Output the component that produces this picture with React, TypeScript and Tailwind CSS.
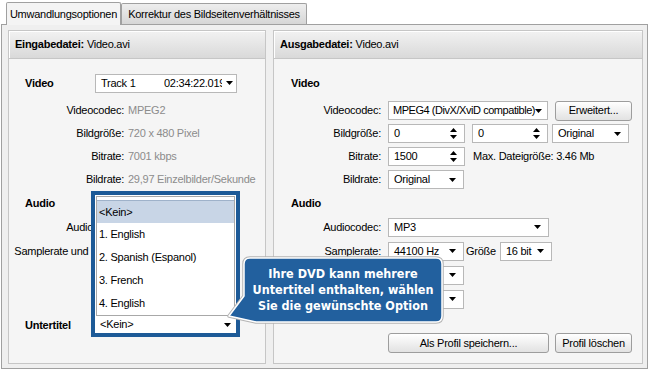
import React from 'react';

const Caret = () => (
  <svg width="7" height="4" viewBox="0 0 7 4" className="shrink-0">
    <path d="M0 0H7L3.5 4Z" fill="#000" />
  </svg>
);

const SpinArrows = () => (
  <svg width="7" height="11" viewBox="0 0 7 11" className="shrink-0">
    <path d="M0 4H7L3.5 0Z M0 7H7L3.5 11Z" fill="#000" />
  </svg>
);

const Select = ({ text, className }: { text: string; className: string }) => (
  <div className={`flex h-[19px] items-center justify-between border border-[#b8b8b8] bg-white pl-[5px] pr-[7px] ${className}`}>
    <span className="whitespace-nowrap">{text}</span>
    <Caret />
  </div>
);

const Spinner = ({ text, className }: { text: string; className: string }) => (
  <div className={`flex h-[19px] items-center justify-between border border-[#b8b8b8] bg-white pl-[5px] pr-[7px] ${className}`}>
    <span>{text}</span>
    <SpinArrows />
  </div>
);

const Button = ({ text, className }: { text: string; className: string }) => (
  <div className={`flex h-[20px] items-center justify-center rounded-[3px] border border-[#9d9d9d] bg-linear-to-b from-white to-[#e2e2e2] ${className}`}>
    {text}
  </div>
);

const GroupHeader = ({ label, file }: { label: string; file: string }) => (
  <div className="flex h-[28px] items-center border-b border-[#c6c6c6] bg-linear-to-b from-[#f2f2f2] to-[#d9d9d9] pl-[6px] shadow-[inset_1px_1px_0_#ffffff]">
    <span className="font-bold">{label}</span>
    <span className="ml-[3px]">{file}</span>
  </div>
);

const InfoRow = ({ label, value }: { label: string; value: string }) => (
  <div className="flex h-[23px] items-center">
    <div className="w-[115px] text-right">{label}</div>
    <div className="ml-[4px] whitespace-nowrap text-[#8c8c8c]">{value}</div>
  </div>
);

const RightRow = ({ label, h, children }: { label: string; h: string; children?: React.ReactNode }) => (
  <div className={`flex items-center ${h}`}>
    <div className="w-[107px] text-right">{label}</div>
    <div className="ml-[7px] flex items-center">{children}</div>
  </div>
);

const subtitleItems = ['<Kein>', '1. English', '2. Spanish (Espanol)', '3. French', '4. English'];

export default function App() {
  return (
    <div className="relative h-[370px] w-[650px] overflow-hidden bg-white font-['Liberation_Sans',Arial,sans-serif] text-[11px] tracking-[-0.25px] text-black">
      {/* Tabs */}
      <div className="flex h-[24px] items-end pl-[6px]">
        <div className="relative z-10 -mb-px flex h-[23px] w-[115px] items-center justify-center whitespace-nowrap rounded-t-[2px] border border-b-0 border-[#a0a0a0] bg-[#f4f4f4]">
          Umwandlungsoptionen
        </div>
        <div className="flex h-[21px] w-[186px] items-center justify-center whitespace-nowrap rounded-t-[2px] border border-b-0 border-[#a0a0a0] bg-linear-to-b from-[#eeeeee] to-[#d6d6d6]">
          Korrektur des Bildseitenverhältnisses
        </div>
      </div>

      {/* Panel */}
      <div className="ml-[1px] flex h-[345px] w-[647px] gap-[7px] border border-[#a0a0a0] bg-[#efefef] pl-[6px] pt-[5px]">
        {/* Input */}
        <div className="flex h-[334px] w-[258px] flex-col border border-[#c6c6c6] bg-[#f5f5f5]">
          <GroupHeader label="Eingabedatei:" file="Video.avi" />
          <div className="flex flex-col pt-[14px]">
            <div className="flex h-[20px] items-center">
              <div className="w-[86px] pl-[16px] font-bold">Video</div>
              <div className="flex h-[19px] w-[142px] items-center border border-[#b8b8b8] bg-white pl-[5px] pr-[3px]">
                <span className="w-[63px] shrink-0">Track 1</span>
                <span className="w-[60px] overflow-hidden whitespace-nowrap">02:34:22.019</span>
                <span className="ml-[4px]">
                  <Caret />
                </span>
              </div>
            </div>
            <div className="mt-[6px]">
              <InfoRow label="Videocodec:" value="MPEG2" />
              <InfoRow label="Bildgröße:" value="720 x 480 Pixel" />
              <InfoRow label="Bitrate:" value="7001 kbps" />
              <InfoRow label="Bildrate:" value="29,97 Einzelbilder/Sekunde" />
            </div>
            <div className="flex h-[24px] items-center pl-[16px] font-bold">Audio</div>
            <div className="flex h-[24px] items-center">
              <div className="w-[115px] text-right">Audiocodec:</div>
            </div>
            <div className="flex h-[24px] items-center">
              <div className="w-[115px] whitespace-nowrap text-right">Samplerate und Größe:</div>
            </div>
            <div className="mt-[53px] flex h-[19px] items-center">
              <div className="w-[86px] pl-[16px] font-bold">Untertitel</div>
            </div>
          </div>
        </div>

        {/* Output */}
        <div className="flex h-[334px] w-[370px] flex-col border border-[#c6c6c6] bg-[#f5f5f5]">
          <GroupHeader label="Ausgabedatei:" file="Video.avi" />
          <div className="flex flex-col pt-[14px]">
            <div className="flex h-[20px] items-center pl-[17px] font-bold">Video</div>
            <div className="mt-[6px]">
              <RightRow label="Videocodec:" h="h-[23px]">
                <div className="flex h-[19px] w-[160px] items-center justify-between border border-[#b8b8b8] bg-white pl-[4px] pr-[6px]">
                  <span className="whitespace-nowrap tracking-[-0.45px]">MPEG4 (DivX/XviD compatible)</span>
                  <Caret />
                </div>
                <Button text="Erweitert..." className="ml-[7px] w-[77px]" />
              </RightRow>
              <RightRow label="Bildgröße:" h="h-[23px]">
                <Spinner text="0" className="w-[77px]" />
                <Spinner text="0" className="ml-[7px] w-[76px]" />
                <Select text="Original" className="ml-[4px] w-[77px]" />
              </RightRow>
              <RightRow label="Bitrate:" h="h-[23px]">
                <Spinner text="1500" className="w-[77px]" />
                <span className="ml-[8px] whitespace-nowrap">Max. Dateigröße: 3.46 Mb</span>
              </RightRow>
              <RightRow label="Bildrate:" h="h-[23px]">
                <Select text="Original" className="w-[76px]" />
              </RightRow>
            </div>
            <div className="flex h-[24px] items-center pl-[17px] font-bold">Audio</div>
            <RightRow label="Audiocodec:" h="h-[24px]">
              <Select text="MP3" className="w-[161px]" />
            </RightRow>
            <RightRow label="Samplerate:" h="h-[24px]">
              <Select text="44100 Hz" className="w-[76px]" />
              <span className="ml-[2px]">Größe</span>
              <Select text="16 bit" className="ml-[4px] w-[52px]" />
            </RightRow>
            <RightRow label="Kanäle:" h="h-[24px]">
              <Select text="Stereo" className="w-[76px]" />
            </RightRow>
            <RightRow label="Bitrate:" h="h-[24px]">
              <Select text="128 kbps" className="w-[76px]" />
            </RightRow>
            <div className="mt-[22px] flex h-[20px] items-center pl-[114px]">
              <Button text="Als Profil speichern..." className="w-[161px]" />
              <Button text="Profil löschen" className="ml-[6px] w-[77px]" />
            </div>
          </div>
        </div>
      </div>

      {/* Opened subtitle dropdown, highlighted */}
      <div className="absolute left-[91px] top-[191px] flex h-[146px] w-[149px] flex-col border-[4px] border-[#1d5a97] bg-white">
        <div className="mx-[1px] mt-[1px] h-[120px] border border-[#a8a8a8] pt-[3px]">
          {subtitleItems.map((item, i) => (
            <div
              key={item}
              className={`flex h-[23px] items-center whitespace-nowrap pl-[2px] ${i === 0 ? 'border-t border-[#9fb2ca] bg-[#c8d5e6]' : ''}`}
            >
              {item}
            </div>
          ))}
        </div>
        <div className="flex h-[17px] items-center justify-between pl-[5px] pr-[5px]">
          <span>&lt;Kein&gt;</span>
          <Caret />
        </div>
      </div>

      {/* Callout */}
      <svg className="absolute left-[226px] top-[254px]" width="222" height="74" viewBox="0 0 222 74">
        <path
          d="M24 4H210Q216 4 216 10V62Q216 68 210 68H30L3 62L18 42V10Q18 4 24 4Z"
          fill="none"
          stroke="#b4b4b4"
          strokeWidth="3.5"
          strokeLinejoin="round"
        />
        <path
          d="M24 4H210Q216 4 216 10V62Q216 68 210 68H30L3 62L18 42V10Q18 4 24 4Z"
          fill="#22609e"
          stroke="#ffffff"
          strokeWidth="1.5"
          strokeLinejoin="round"
        />
      </svg>
      <div className="absolute left-[244px] top-[258px] flex h-[64px] w-[198px] flex-col items-center justify-center whitespace-nowrap text-center font-['DejaVu_Sans_Condensed','DejaVu_Sans',sans-serif] text-[12.5px] font-bold leading-[16px] tracking-normal text-white">
        <div>Ihre DVD kann mehrere</div>
        <div>Untertitel enthalten, wählen</div>
        <div>Sie die gewünschte Option</div>
      </div>
    </div>
  );
}
